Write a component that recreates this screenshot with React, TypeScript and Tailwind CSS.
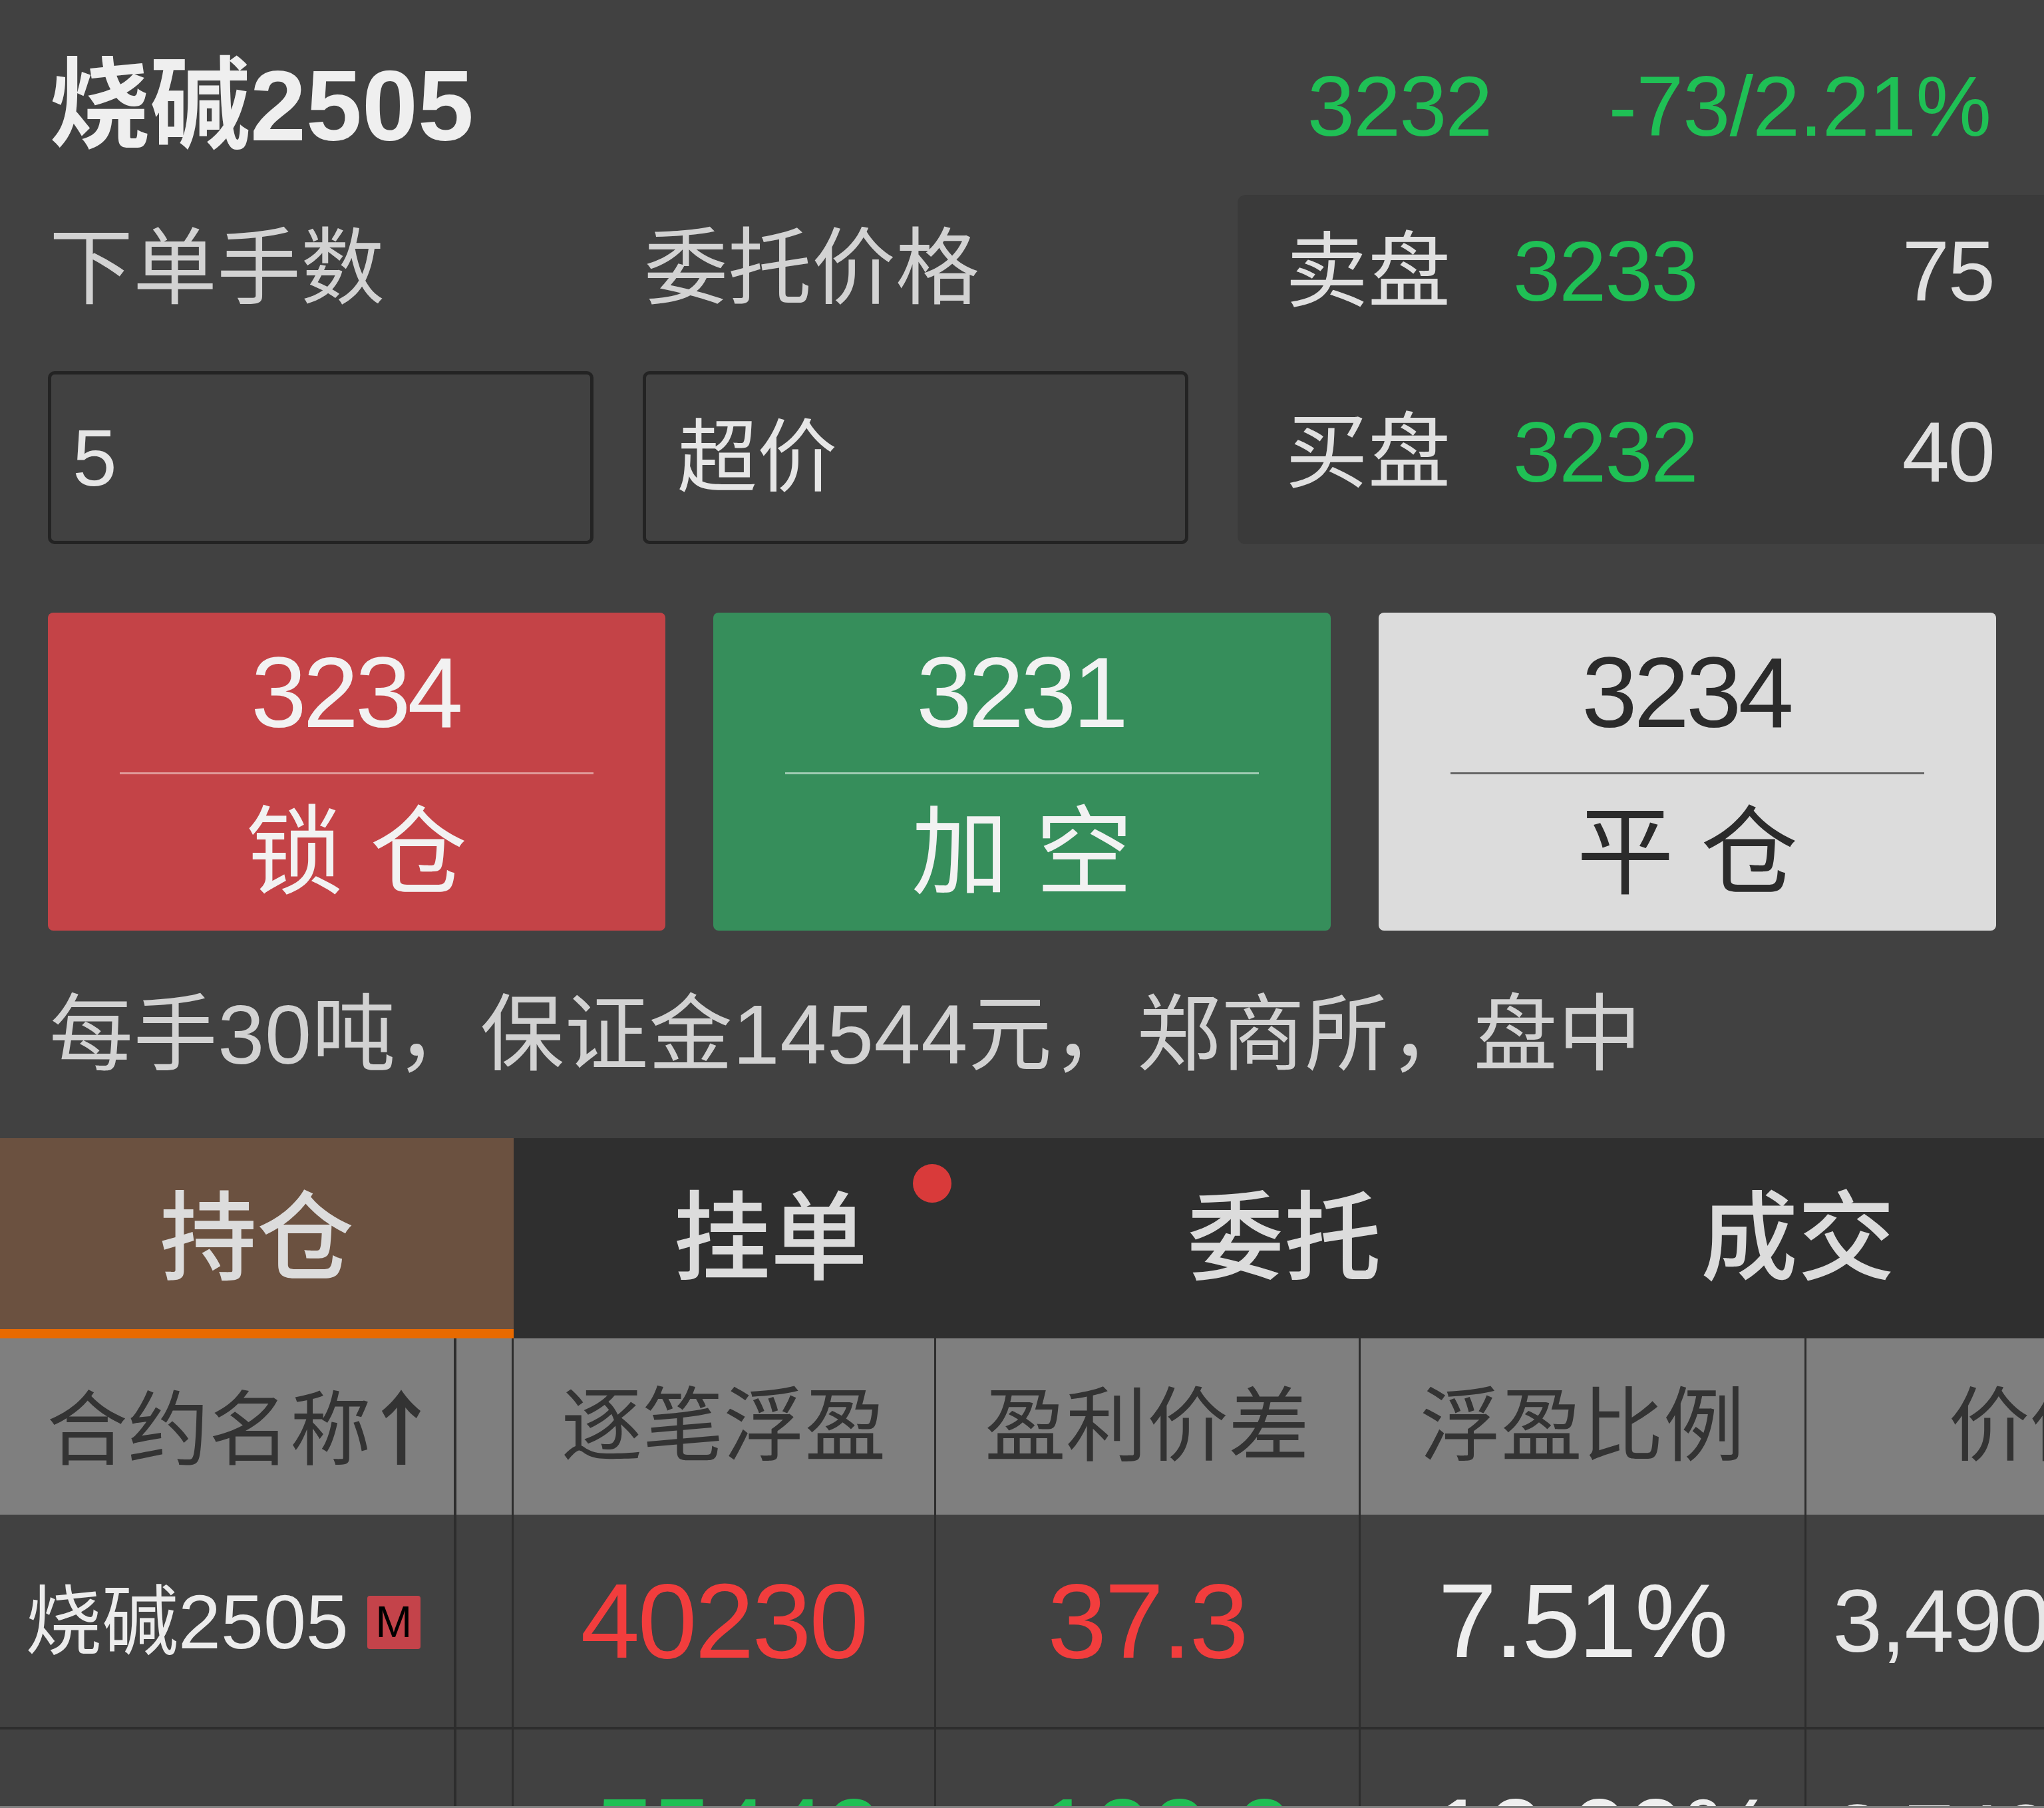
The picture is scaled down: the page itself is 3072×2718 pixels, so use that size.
const font = "font-['Liberation_Sans','Noto_Sans_CJK_SC',sans-serif]"

const tabs = ['持仓', '挂单', '委托', '成交']

const actions = [
  { price: '3234', label: '锁 仓', box: 'bg-[#c44347] text-[#f2f2f2]', line: 'bg-[#e09a9a]' },
  { price: '3231', label: '加 空', box: 'bg-[#368e5b] text-[#f2f2f2]', line: 'bg-[#a0ccb3]' },
  { price: '3234', label: '平 仓', box: 'bg-[#dcdcdc] text-[#2b2b2b]', line: 'bg-[#666666]' },
]

function Field({ label, value, inset }: { label: string; value: string; inset: string }) {
  return (
    <div className="w-[820px] flex flex-col">
      <div className="h-[265px] pl-[2px] pt-[38px] text-[126px] leading-[146px] text-[#d2d2d2]">{label}</div>
      <div className={`h-[260px] flex items-center border-[5px] border-[#232323] rounded-[10px] text-[120px] text-[#e6e6e6] ${inset}`}>
        {value}
      </div>
    </div>
  )
}

function Quote({ label, price, vol }: { label: string; price: string; vol: string }) {
  return (
    <div className="h-[230px] flex items-center">
      <span className="w-[342px] text-[124px] text-[#e0e0e0]">{label}</span>
      <span className="text-[128px] tracking-[-2px] text-[#1fc055]">{price}</span>
      <span className="ml-auto text-[128px] tracking-[-2px] text-[#e0e0e0]">{vol}</span>
    </div>
  )
}

export default function App() {
  return (
    <div className={`${font} relative w-[3072px] h-[2718px] overflow-hidden bg-[#414141]`}>
      <div className="h-[293px] flex items-center justify-between pl-[74px] pr-[80px] pt-[26px]">
        <span className="text-[151px] font-bold text-[#efefef]">烧碱2505</span>
        <span className="flex gap-[176px] text-[128px] text-[#1fc055]">
          <span className="tracking-[-2px]">3232</span>
          <span className="tracking-[-1px]">-73/2.21%</span>
        </span>
      </div>

      <div className="flex pl-[72px] h-[525px]">
        <div className="flex gap-[74px]">
          <Field label="下单手数" value="5" inset="pl-[32px]" />
          <Field label="委托价格" value="超价" inset="pl-[47px]" />
        </div>
        <div className="ml-[74px] flex-1 bg-[#3a3a3a] rounded-l-[12px] pl-[72px] pr-[75px] flex flex-col gap-[42px]">
          <Quote label="卖盘" price="3233" vol="75" />
          <Quote label="买盘" price="3232" vol="40" />
        </div>
      </div>

      <div className="mt-[103px] pl-[72px] flex gap-[72px]">
        {actions.map((a) => (
          <div key={a.label} className={`w-[928px] h-[478px] rounded-[8px] flex flex-col items-center ${a.box}`}>
            <div className="h-[240px] pr-[4px] flex items-center text-[150px] tracking-[-5px]">{a.price}</div>
            <div className={`w-[712px] h-[3px] ${a.line}`} />
            <div className="flex-1 flex items-center text-[146px]">{a.label}</div>
          </div>
        ))}
      </div>

      <div className="h-[312px] flex items-center pl-[74px] text-[126px] tracking-[0.6px] text-[#d2d2d2]">
        每手30吨，保证金14544元，郑商所，盘中
      </div>

      <div className="h-[301px] flex bg-[#2f2f2f] overflow-hidden">
        {tabs.map((t, i) => (
          <div
            key={t}
            className={`relative w-[772px] shrink-0 flex items-center justify-center text-[146px] font-medium text-[#dcdcdc] ${
              i === 0 ? 'bg-[#6b5140] border-b-[14px] border-[#e86a00] pt-[14px]' : ''
            }`}
          >
            {t}
            {i === 1 && <span className="absolute left-[600px] top-[39px] w-[58px] h-[58px] rounded-full bg-[#d93a3a]" />}
          </div>
        ))}
      </div>

      <table className="w-[3072px] table-fixed border-collapse">
        <colgroup>
          <col className="w-[684px]" />
          <col className="w-[86px]" />
          <col className="w-[635px]" />
          <col className="w-[638px]" />
          <col className="w-[670px]" />
          <col />
        </colgroup>
        <thead>
          <tr className="h-[265px] bg-[#7f7f7f] text-[122px] text-[#333333]">
            <th className="font-normal text-left pl-[70px] border-r-[4px] border-[#2d2d2d] whitespace-nowrap">
              合约名称<span className="font-['Noto_Sans_CJK_SC'] font-bold -ml-[16px]">↑</span>
            </th>
            <th className="border-r-[3px] border-[#2d2d2d]" />
            <th className="font-normal border-r-[3px] border-[#2d2d2d] whitespace-nowrap">逐笔浮盈</th>
            <th className="font-normal border-r-[3px] border-[#2d2d2d] whitespace-nowrap">盈利价差</th>
            <th className="font-normal border-r-[3px] border-[#2d2d2d] whitespace-nowrap">浮盈比例</th>
            <th className="font-normal text-left pl-[214px] whitespace-nowrap">价值</th>
          </tr>
        </thead>
        <tbody>
          <tr className="h-[321px] border-b-[4px] border-[#2d2d2d]">
            <td className="pl-[38px] pt-[4px] border-r-[4px] border-[#2d2d2d] whitespace-nowrap text-[115px] text-[#ececec]">
              <span className="inline-flex items-center gap-[28px]">
                烧碱2505
                <span className="w-[80px] h-[80px] rounded-[4px] bg-[#c4434a] text-black text-[66px] flex items-center justify-center">M</span>
              </span>
            </td>
            <td className="border-r-[3px] border-[#2d2d2d]" />
            <td className="text-center border-r-[3px] border-[#2d2d2d] text-[160px] tracking-[-3px] text-[#f23d3d]">40230</td>
            <td className="text-center border-r-[3px] border-[#2d2d2d] text-[160px] tracking-[-3px] text-[#f23d3d]">37.3</td>
            <td className="text-center border-r-[3px] border-[#2d2d2d] text-[158px] tracking-[-3px] text-[#eeeeee]">7.51%</td>
            <td className="pl-[40px] whitespace-nowrap text-[134px] tracking-[-2px] text-[#e6e6e6]">3,490</td>
          </tr>
          <tr className="h-[321px]">
            <td className="border-r-[4px] border-[#2d2d2d]" />
            <td className="border-r-[3px] border-[#2d2d2d]" />
            <td className="text-center pl-[44px] border-r-[3px] border-[#2d2d2d] text-[160px] tracking-[-3px] text-[#1fc055]">55440</td>
            <td className="text-center pl-[50px] border-r-[3px] border-[#2d2d2d] text-[160px] tracking-[-3px] text-[#1fc055]">100.0</td>
            <td className="text-center pl-[60px] border-r-[3px] border-[#2d2d2d] text-[158px] tracking-[-3px] text-[#eeeeee]">10.00%</td>
            <td className="pl-[40px] whitespace-nowrap text-[134px] tracking-[-2px] text-[#e6e6e6]">3,740</td>
          </tr>
        </tbody>
      </table>

      <div className="absolute bottom-0 left-0 w-full h-[3px] bg-[#7f7f7f]" />
    </div>
  )
}
